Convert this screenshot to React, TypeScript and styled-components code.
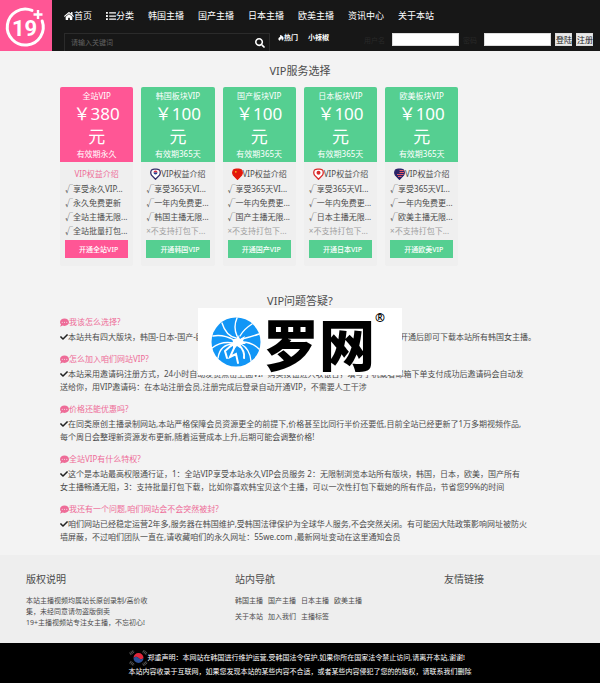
import React from "react";
import styled, { createGlobalStyle } from "styled-components";
import { FaCheck, FaCommentDots, FaHome, FaHotjar, FaList, FaSearch } from "react-icons/fa";

const PINK = "#ff5695";
const GREEN = "#55cf91";

const GlobalStyle = createGlobalStyle`
  * { box-sizing: border-box; }
  body {
    margin: 0;
    background: #f3f3f3;
    color: #4c4c4c;
    font-family: "Noto Sans", "Noto Sans CJK SC", sans-serif;
    font-size: 8px;
  }
  h2, h3, p, ul { margin: 0; padding: 0; font-weight: 400; }
  ul { list-style: none; }
  a { color: inherit; text-decoration: none; }
  button, input { font-family: inherit; }
`;

const Page = styled.div`
  position: relative;
`;

const Header = styled.header`
  display: flex;
  height: 51px;
  background: #171717;
  color: #fff;
`;

const LogoLink = styled.a`
  display: flex;
  width: 52px;
  flex: none;
  background: ${PINK};
`;

const HeaderMain = styled.div`
  flex: 1;
  min-width: 0;
  padding: 8px 7px 0 12px;
`;

const Nav = styled.nav`
  display: flex;
  gap: 14px;
  height: 16px;
  line-height: 16px;
  font-size: 9px;
  white-space: nowrap;
`;

const NavLink = styled.a`
  display: flex;
  align-items: center;
`;

const Tools = styled.div`
  display: flex;
  align-items: flex-start;
  padding-top: 9px;
  white-space: nowrap;
`;

const SearchForm = styled.form`
  display: flex;
  align-items: center;
  flex: 0 1 206px;
  height: 18px;
  padding: 0 4px 0 6px;
  border: 1px solid #2b2b2b;
  border-bottom: 0;
`;

const SearchInput = styled.input`
  flex: 1;
  min-width: 0;
  padding: 0;
  border: 0;
  background: none;
  color: #fff;
  font-size: 7px;
  &::placeholder { color: #626262; }
`;

const SearchButton = styled.button`
  display: flex;
  padding: 0;
  border: 0;
  background: none;
  color: #fff;
  font-size: 10px;
`;

const HotLinks = styled.div`
  display: flex;
  gap: 10px;
  margin-left: 8px;
  line-height: 10px;
  font-size: 7px;
  font-weight: 700;
`;

const HotLink = styled.a`
  display: flex;
  align-items: center;
`;

const LoginForm = styled.form`
  display: flex;
  align-items: center;
  gap: 4px;
  height: 13px;
  margin-left: auto;
`;

const LoginLabel = styled.label`
  display: flex;
  align-items: center;
  gap: 7px;
  color: #292929;
  font-size: 7px;
`;

const LoginInput = styled.input`
  width: 67px;
  height: 13px;
  padding: 0 2px;
  border: 1px solid #ddd;
  background: #fff;
  font-size: 8px;
`;

const SmallButton = styled.button`
  height: 13px;
  width: 17px;
  padding: 0;
  border: 1px solid #ddd;
  background: #e9e9e9;
  color: #222;
  font-size: 8px;
  line-height: 11px;
  white-space: nowrap;
`;

const Main = styled.main`
  width: 80%;
  margin: 0 auto;
`;

const SectionTitle = styled.h2`
  text-align: center;
  font-size: 11px;
  line-height: 16px;
`;

const Plans = styled.section`
  padding-top: 12px;
`;

const PlanGrid = styled.div`
  display: grid;
  grid-template-columns: repeat(5, 1fr);
  gap: 8px;
  width: 83%;
  margin-top: 8px;
`;

const Plan = styled.article`
  border-radius: 2px;
  background: #efefef;
  overflow: hidden;
`;

const PlanHead = styled.header<{ $tone: string }>`
  padding: 3px 0 2px;
  background: ${(p) => p.$tone};
  color: #fff;
  text-align: center;
  line-height: 12px;
`;

const Price = styled.p`
  padding: 0 12px;
  font-size: 17px;
  line-height: 23px;
`;

const PlanBody = styled.div`
  padding: 4px 5px 8px;
`;

const PlanTitle = styled.h3<{ $tone?: string }>`
  display: flex;
  justify-content: center;
  align-items: center;
  font-size: 8px;
  line-height: 16px;
  height: 16px;
  white-space: nowrap;
  color: ${(p) => p.$tone || "inherit"};
`;

const Perk = styled.li<{ $off?: boolean }>`
  height: 14px;
  line-height: 14px;
  white-space: nowrap;
  color: ${(p) => (p.$off ? "#a0a0a0" : "inherit")};
`;

const BuyButton = styled.button<{ $tone: string }>`
  display: block;
  width: 100%;
  height: 18px;
  margin-top: 2px;
  padding: 0 0 0 4px;
  border: 0;
  background: ${(p) => p.$tone};
  color: #fff;
  font-size: 7px;
  font-weight: 500;
  white-space: nowrap;
`;

const Faq = styled.section`
  padding: 27px 0 12px;
`;

const FaqList = styled.div`
  display: grid;
  gap: 8px;
  margin-top: 5px;
`;

const Question = styled.h3`
  display: flex;
  align-items: center;
  font-size: 8px;
  line-height: 16px;
  color: #ee6c98;
`;

const Answer = styled.p`
  line-height: 13px;
  white-space: nowrap;
  svg { vertical-align: -1px; color: #222; }
`;

const Footer = styled.footer`
  background: #eee;
`;

const FooterGrid = styled.div`
  display: grid;
  grid-template-columns: 209fr 209fr 156fr;
  min-height: 88px;
  padding: 16px 0 0 26px;
`;

const FooterTitle = styled.h3`
  margin-bottom: 8px;
  font-size: 10px;
  line-height: 16px;
`;

const FooterText = styled.p`
  font-size: 7px;
  line-height: 11px;
`;

const FooterLinks = styled.div`
  display: flex;
  gap: 5px;
  margin-bottom: 5px;
  font-size: 7px;
  line-height: 11px;
`;

const Notice = styled.div`
  display: flex;
  justify-content: center;
  padding: 8px 0 5px;
  background: #000;
  color: #fff;
  font-size: 7px;
  line-height: 14px;
  white-space: nowrap;
`;

const NoticeLine = styled.p`
  display: flex;
  align-items: center;
  height: 14px;
`;

const Watermark = styled.div`
  position: absolute;
  top: 308px;
  left: 50%;
  display: flex;
  align-items: center;
  width: 204px;
  height: 67px;
  padding-left: 13px;
  transform: translateX(-50%);
  background: #fff;
  color: #000;
`;

const WatermarkText = styled.span`
  margin-left: 2px;
  font-family: "Noto Sans CJK SC", sans-serif;
  font-size: 56px;
  font-weight: 900;
  line-height: 67px;
`;

const Registered = styled.span`
  align-self: flex-start;
  margin-top: 2px;
  font-size: 12px;
  font-weight: 700;
  line-height: 16px;
`;

const Logo = () => (
  <svg width="52" height="51" viewBox="0 0 52 51" aria-hidden="true">
    <path
      d="M32 10.400A18 18 0 1 0 42.200 21"
      fill="none"
      stroke="#fff"
      strokeWidth="3"
      strokeLinecap="round"
    />
    <path d="M38 10v9M33.500 14.500h9" stroke="#fff" strokeWidth="2.400" />
    <text
      x="24.500"
      y="36"
      textAnchor="middle"
      fill="#fff"
      fontFamily="Roboto, sans-serif"
      fontWeight="700"
      fontSize="22"
    >
      19
    </text>
  </svg>
);

const Spider = () => (
  <svg width="50" height="50" viewBox="0 0 50 50" aria-hidden="true">
    <circle cx="25" cy="25" r="24.500" fill="#1296f6" />
    <g fill="none" stroke="#fff" strokeWidth="1.400" strokeLinecap="round">
      <path d="M25 21Q15 19 11 6M26 19Q22 10 26 1M29 19Q33 12 41 7M31 22Q40 20 48 17" />
      <path d="M23 23Q12 17 2 19M22 26Q10 24 1 31M23 27Q9 27 7 41" />
      <path d="M31 25Q41 25 48 32M30 27Q39 32 40 44" />
      <path d="M22 27L14 34L16 41M24 29L19 40L25 37L27 46M28 28Q34 34 33 41" strokeWidth="2" />
    </g>
    <path d="M21 22l4 0 2-4 2 4 5-3-2 5 3 3-5 0-1 4-3-2-4 4 0-4-3 1 3-5z" fill="#fff" />
  </svg>
);

type Country = "kr" | "cn" | "jp" | "us";

const Pin = ({ country }: { country: Country }) => {
  const fill = { kr: "#fff", cn: "#e3170a", jp: "#fff", us: "#2b2468" }[country];
  const edge = { kr: "#35306b", cn: "#e3170a", jp: "#d92b2b", us: "#2b2468" }[country];
  return (
    <svg width="11" height="12" viewBox="0 0 11 12" aria-hidden="true">
      <path
        d="M5.500 11.300L1.500 7.200Q0 4.500 1.500 2Q3.500 .8 5.500 1.200Q7.500 .8 9.500 2Q11 4.500 9.500 7.200Z"
        fill={fill}
        stroke={edge}
        strokeWidth="1.300"
      />
      {country === "kr" && (
        <>
          <path d="M3.500 4.500a2 2 0 0 1 4 0z" fill="#d8324a" />
          <path d="M3.500 4.500a2 2 0 0 0 4 0z" fill="#26408f" />
        </>
      )}
      {country === "cn" && <circle cx="3.800" cy="3.800" r=".9" fill="#f6b51d" />}
      {country === "jp" && <circle cx="5.500" cy="4.800" r="2" fill="#d92b2b" />}
      {country === "us" && (
        <path d="M5.500 2.500h4M5.500 4.500h4.500M3 6.500h6.500M4 8.500h3.500" stroke="#e25b68" strokeWidth="1" />
      )}
    </svg>
  );
};

const Flag = () => (
  <svg width="19" height="16" viewBox="0 0 19 16" aria-hidden="true">
    <path d="M4.500 8a5 5 0 0 1 10 0q-2.500 2.500-5 0t-5 0z" fill="#e0263c" />
    <path d="M14.500 8a5 5 0 0 1-10 0q2.500-2.500 5 0t5 0z" fill="#2c4f96" />
    <g stroke="#555" strokeWidth="3" strokeDasharray="1 .6">
      <path d="M1 4l4-3M14 1l4 3M1 12l4 3M14 15l4-3" />
    </g>
  </svg>
);

const plans: { area: string; name: string; price: string; term: string; country?: Country; perks: string[] }[] = [
  {
    area: "全站",
    name: "全站VIP",
    price: "380",
    term: "有效期永久",
    perks: ["√享受永久VIP...", "√永久免费更新", "√全站主播无限...", "√全站批量打包..."],
  },
  ...(
    [
      ["韩国", "kr"],
      ["国产", "cn"],
      ["日本", "jp"],
      ["欧美", "us"],
    ] as [string, Country][]
  ).map(([area, country]) => ({
    area,
    country,
    name: `${area}板块VIP`,
    price: "100",
    term: "有效期365天",
    perks: ["√享受365天VI...", "√一年内免费更...", `√${area}主播无限...`, "×不支持打包下..."],
  })),
];

const faqs: { q: string; a: string[] }[] = [
  {
    q: "我该怎么选择?",
    a: ["本站共有四大版块，韩国-日本-国产-欧美，可选择自己喜欢的板块，开通对应VIP，例如韩国，开通后即可下载本站所有韩国女主播。"],
  },
  {
    q: "怎么加入咱们网站VIP?",
    a: [
      "本站采用邀请码注册方式，24小时自动发货点击上面VIP 购买按钮进入收银台，填写手机或者邮箱下单支付成功后邀请码会自动发",
      "送给你，用VIP邀请码：在本站注册会员,注册完成后登录自动开通VIP，不需要人工干涉",
    ],
  },
  {
    q: "价格还能优惠吗?",
    a: [
      "在同类原创主播录制网站,本站严格保障会员资源更全的前提下,价格甚至比同行半价还要低,目前全站已经更新了1万多期视频作品,",
      "每个周日会整理新资源发布更新,随着运营成本上升,后期可能会调整价格!",
    ],
  },
  {
    q: "全站VIP有什么特权?",
    a: [
      "这个是本站最高权限通行证，1：全站VIP享受本站永久VIP会员服务 2：无限制浏览本站所有版块，韩国，日本，欧美，国产所有",
      "女主播畅通无阻，3：支持批量打包下载，比如你喜欢韩宝贝这个主播，可以一次性打包下载她的所有作品，节省您99%的时间",
    ],
  },
  {
    q: "我还有一个问题,咱们网站会不会突然被封?",
    a: [
      "咱们网站已经稳定运营2年多,服务器在韩国维护,受韩国法律保护为全球华人服务,不会突然关闭。有可能因大陆政策影响网址被防火",
      "墙屏蔽，不过咱们团队一直在,请收藏咱们的永久网址：55we.com ,最新网址变动在这里通知会员",
    ],
  },
];

const navItems = ["首页", "分类", "韩国主播", "国产主播", "日本主播", "欧美主播", "资讯中心", "关于本站"];
const footerRows = [
  ["韩国主播", "国产主播", "日本主播", "欧美主播"],
  ["关于本站", "加入我们", "主播标签"],
];

export default function App() {
  return (
    <Page>
      <GlobalStyle />
      <Header>
        <LogoLink href="#" aria-label="19+">
          <Logo />
        </LogoLink>
        <HeaderMain>
          <Nav>
            {navItems.map((item, i) => (
              <NavLink href="#" key={item}>
                {i === 0 && <FaHome size={10} />}
                {i === 1 && <FaList size={10} />}
                {item}
              </NavLink>
            ))}
          </Nav>
          <Tools>
            <SearchForm>
              <SearchInput aria-label="搜索" placeholder="请输入关键词" />
              <SearchButton type="button" aria-label="搜索">
                <FaSearch />
              </SearchButton>
            </SearchForm>
            <HotLinks>
              <HotLink href="#">
                <FaHotjar size={6} />
                热门
              </HotLink>
              <HotLink href="#">小辣椒</HotLink>
            </HotLinks>
            <LoginForm>
              <LoginLabel>
                用户名
                <LoginInput type="text" />
              </LoginLabel>
              <LoginLabel>
                密码
                <LoginInput type="password" />
              </LoginLabel>
              <SmallButton type="button">登陆</SmallButton>
              <SmallButton type="button">注册</SmallButton>
            </LoginForm>
          </Tools>
        </HeaderMain>
      </Header>

      <Main>
        <Plans>
          <SectionTitle>VIP服务选择</SectionTitle>
          <PlanGrid>
            {plans.map((plan) => {
              const tone = plan.country ? GREEN : PINK;
              return (
                <Plan key={plan.name}>
                  <PlanHead $tone={tone}>
                    <p>{plan.name}</p>
                    <Price>￥{plan.price} 元</Price>
                    <p>{plan.term}</p>
                  </PlanHead>
                  <PlanBody>
                    <PlanTitle $tone={plan.country ? undefined : "#ee6c98"}>
                      {plan.country && <Pin country={plan.country} />}
                      VIP权益介绍
                    </PlanTitle>
                    <ul>
                      {plan.perks.map((perk) => (
                        <Perk key={perk} $off={perk.startsWith("×")}>
                          {perk}
                        </Perk>
                      ))}
                    </ul>
                    <BuyButton type="button" $tone={tone}>
                      开通{plan.area}VIP
                    </BuyButton>
                  </PlanBody>
                </Plan>
              );
            })}
          </PlanGrid>
        </Plans>

        <Faq>
          <SectionTitle>VIP问题答疑?</SectionTitle>
          <FaqList>
            {faqs.map((item) => (
              <div key={item.q}>
                <Question>
                  <FaCommentDots size={9} />
                  {item.q}
                </Question>
                <Answer>
                  <FaCheck size={8} />
                  {item.a.map((line, i) => (
                    <React.Fragment key={line}>
                      {i > 0 && <br />}
                      {line}
                    </React.Fragment>
                  ))}
                </Answer>
              </div>
            ))}
          </FaqList>
        </Faq>
      </Main>

      <Footer>
        <FooterGrid>
          <section>
            <FooterTitle>版权说明</FooterTitle>
            <FooterText>
              本站主播视频均属站长原创录制/高价收
              <br />
              集，未经同意请勿盗版倒卖
              <br />
              19+主播视频站专注女主播，不忘初心!
            </FooterText>
          </section>
          <section>
            <FooterTitle>站内导航</FooterTitle>
            {footerRows.map((row) => (
              <FooterLinks key={row[0]}>
                {row.map((label) => (
                  <a href="#" key={label}>
                    {label}
                  </a>
                ))}
              </FooterLinks>
            ))}
          </section>
          <section>
            <FooterTitle>友情链接</FooterTitle>
          </section>
        </FooterGrid>
        <Notice>
          <div>
            <NoticeLine>
              <Flag />
              郑重声明：本网站在韩国进行维护运营,受韩国法令保护,如果你所在国家法令禁止访问,请离开本站,谢谢!
            </NoticeLine>
            <NoticeLine>
              本站内容收录于互联网，如果您发现本站的某些内容不合适，或者某些内容侵犯了您的的版权，请联系我们删除
            </NoticeLine>
          </div>
        </Notice>
      </Footer>

      <Watermark>
        <Spider />
        <WatermarkText>罗网</WatermarkText>
        <Registered>®</Registered>
      </Watermark>
    </Page>
  );
}
